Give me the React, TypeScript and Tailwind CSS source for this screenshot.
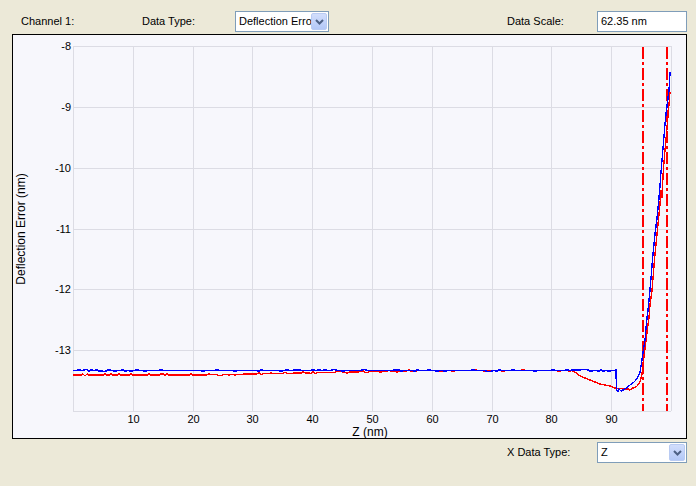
import React from 'react';

// plot geometry in page pixels
const X0 = 73;
const X1 = 671;
const Y0 = 46;
const Y1 = 411;
const xPx = (v: number) => X0 + (v / 100) * (X1 - X0);
const yPx = (v: number) => Y0 + ((-8 - v) / 6) * (Y1 - Y0);

function rng(seed: number) {
  let s = seed;
  return () => {
    s = (s * 1103515245 + 12345) % 2147483648;
    return s / 2147483648;
  };
}

function flat(from: number, to: number, y: (x: number) => number, seed: number) {
  const r = rng(seed);
  const pts: string[] = [];
  for (let x = from; x <= to; x += 2) {
    const n = r();
    const j = n > 0.86 ? -1 : n < 0.08 ? 1 : 0;
    pts.push(`${x},${(y(x) + j).toFixed(1)}`);
  }
  return pts;
}

const bluePts = [
  ...flat(73, 615, () => 370.5, 7),
  '616,370', '616.5,390', '618,391.5', '619,389', '621,391', '624,389.5', '627,387.5', '630,385',
  '633,383', '636,380', '638,377', '640,372', '641,366', '642,360', '643,352', '645,340',
  '646,328', '647,318', '648,310', '649,300', '650,290', '651,278', '652,266', '653,254',
  '654,244', '655,234', '656,226', '657,218', '658,208', '659,198', '660,186', '661,172',
  '662,160', '663,148', '664,136', '665,124', '666,114', '667,106', '668,98', '669,90',
  '669.5,82', '670,72',
].join(' ');

const redPts = [
  ...flat(73, 572, (x) => (x < 200 ? 375 : x < 430 ? 375 - ((x - 200) / 230) * 4.5 : 370.5), 21),
  '575,372', '580,376', '585,378', '590,380', '595,382', '600,384', '605,385', '610,386',
  '615,388', '620,388.5', '625,389', '628,389', '630,390', '633,388', '636,387', '638,385',
  '640,382', '642,374', '643,364', '644,356', '645,348', '646,340', '647,332', '649,318',
  '650,305', '651,298', '652,290', '653,278', '654,266', '655,254', '656,244', '657,234',
  '658,224', '659,214', '660,204', '661,190', '662,198', '662.5,186', '663,176', '664,162',
  '665,150', '666,140', '667,128', '668,116', '669,104', '670,92',
].join(' ');

function Chevron() {
  return (
    <div className="w-[16px] h-[17px] mr-[1px] rounded-[2px] border border-[#B9CBF3] bg-gradient-to-b from-[#D2DEFC] to-[#B3C8F7] flex items-center justify-center">
      <svg width="9" height="6" viewBox="0 0 9 6" aria-hidden="true">
        <path d="M1 1 4.5 4.5 8 1" fill="none" stroke="#4D6185" strokeWidth="2" />
      </svg>
    </div>
  );
}

function Combo({ value, width }: { value: string; width: string }) {
  return (
    <div className={`${width} h-[21px] bg-white border border-[#7F9DB9] flex items-center`}>
      <span className="flex-1 pl-[3px] overflow-hidden whitespace-nowrap">{value}</span>
      <Chevron />
    </div>
  );
}

function Plot() {
  const hLines = [-8, -9, -10, -11, -12, -13, -14];
  const vLines = [0, 10, 20, 30, 40, 50, 60, 70, 80, 90, 100];
  return (
    <svg width="673" height="403" className="block" style={{ fontFamily: '"Liberation Sans", Arial, sans-serif' }}>
      <g transform="translate(-13 -35)">
        <g stroke="#DCDCE4" strokeWidth="1" shapeRendering="crispEdges">
          {hLines.map((v) => (
            <line key={v} x1={X0} x2={X1} y1={Math.round(yPx(v)) + 0.5} y2={Math.round(yPx(v)) + 0.5} />
          ))}
          {vLines.map((v) => (
            <line key={v} x1={Math.round(xPx(v)) + 0.5} x2={Math.round(xPx(v)) + 0.5} y1={Y0} y2={Y1} />
          ))}
        </g>
        <g fontSize="11" fill="#000" textAnchor="end">
          {hLines.slice(0, 6).map((v) => (
            <text key={v} x={71} y={Math.round(yPx(v)) + 4}>
              {v}
            </text>
          ))}
        </g>
        <g fontSize="11" fill="#000" textAnchor="middle">
          {vLines.slice(1, 10).map((v) => (
            <text key={v} x={Math.round(xPx(v)) + 0.5} y={423}>
              {v}
            </text>
          ))}
        </g>
        <text x={370} y={436} fontSize="12" textAnchor="middle">
          Z (nm)
        </text>
        <text x={0} y={0} fontSize="12" textAnchor="middle" transform="translate(25 229) rotate(-90)">
          Deflection Error (nm)
        </text>
        <g stroke="#FF0000" strokeWidth="2" strokeDasharray="12 3 3 3" shapeRendering="crispEdges">
          <line x1={642.5} x2={642.5} y1={47} y2={Y1} />
          <line x1={666.5} x2={666.5} y1={47} y2={Y1} />
        </g>
        <polyline points={redPts} fill="none" stroke="#FF0000" strokeWidth="1.4" shapeRendering="optimizeSpeed" />
        <polyline points={bluePts} fill="none" stroke="#0000FF" strokeWidth="1.4" shapeRendering="optimizeSpeed" />
      </g>
    </svg>
  );
}

export default function App() {
  return (
    <div
      className="w-[696px] h-[486px] bg-[#ECE9D8] text-[11px] text-black overflow-hidden"
      style={{ fontFamily: '"Liberation Sans", Arial, sans-serif' }}
    >
      <div className="h-[34px] flex items-start pt-[11px]">
        <span className="w-[121px] ml-[21px] h-[21px] leading-[20px]">Channel 1:</span>
        <span className="w-[93px] h-[21px] leading-[20px]">Data Type:</span>
        <Combo value="Deflection Erro" width="w-[94px]" />
        <span className="ml-[178px] w-[90px] h-[21px] leading-[20px]">Data Scale:</span>
        <div className="w-[90px] h-[21px] bg-white border border-[#7F9DB9] pl-[3px] leading-[19px]">62.35 nm</div>
      </div>
      <div className="ml-[12px] w-[675px] h-[405px] border border-black bg-[#F7F7FC]">
        <Plot />
      </div>
      <div className="flex items-start pt-[3px]">
        <span className="ml-[507px] w-[90px] h-[21px] leading-[20px]">X Data Type:</span>
        <Combo value="Z" width="w-[90px]" />
      </div>
    </div>
  );
}
